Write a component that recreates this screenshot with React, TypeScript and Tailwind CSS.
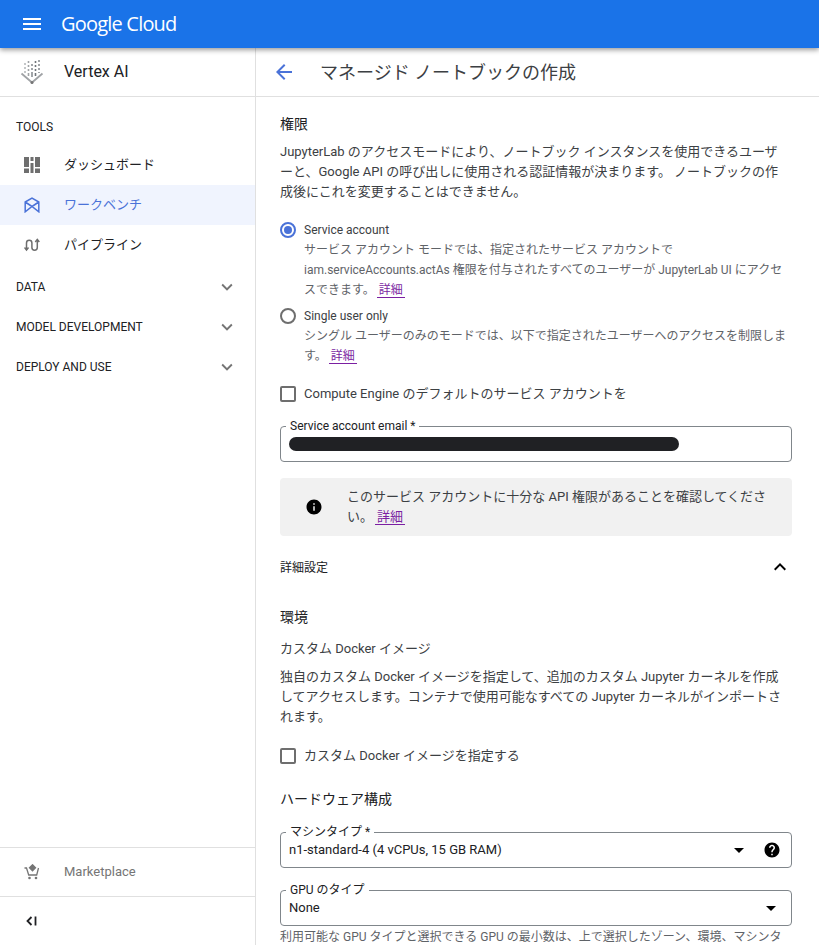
import React from 'react';

const MENU = 'M3 18h18v-2H3v2zm0-5h18v-2H3v2zm0-7v2h18V6H3z';
const BACK = 'M20 11H7.83l5.59-5.59L12 4l-8 8 8 8 1.41-1.41L7.83 13H20v-2z';
const EXPAND_MORE = 'M16.59 8.59L12 13.17 7.41 8.59 6 10l6 6 6-6z';
const EXPAND_LESS = 'M12 8l-6 6 1.41 1.41L12 10.83l4.59 4.58L18 14z';
const INFO = 'M12 2C6.48 2 2 6.48 2 12s4.48 10 10 10 10-4.48 10-10S17.52 2 12 2zm1 15h-2v-6h2v6zm0-8h-2V7h2v2z';
const HELP = 'M12 2C6.48 2 2 6.48 2 12s4.48 10 10 10 10-4.48 10-10S17.52 2 12 2zm1 17h-2v-2h2v2zm2.07-7.75l-.9.92C13.45 12.9 13 13.5 13 15h-2v-.5c0-1.1.45-2.1 1.17-2.83l1.24-1.26c.37-.36.59-.86.59-1.41 0-1.1-.9-2-2-2s-2 .9-2 2H8c0-2.21 1.79-4 4-4s4 1.79 4 4c0 .88-.36 1.68-.93 2.25z';
const DROP = 'M7 10l5 5 5-5z';

const Icon = ({ d, className }: { d: string; className?: string }) => (
  <svg viewBox="0 0 24 24" fill="currentColor" className={className}>
    <path d={d} />
  </svg>
);

const VertexLogo = () => (
  <svg viewBox="0 0 24 26" className="w-6 h-[26px]" fill="none" stroke="#8a8f94">
    <g strokeWidth="1.6">
      <path d="M5 4v2M5 8v2M5 12v2" stroke="#b5b8bb" />
      <path d="M8.5 2v2M8.5 6v2M8.5 10v2M8.5 14v3" stroke="#a0a3a6" />
      <path d="M12 5v2M12 9v2M12 13v5" stroke="#8a8f94" />
      <path d="M15.5 2v2M15.5 6v2M15.5 10v2M15.5 14v3" stroke="#70757a" />
      <path d="M19 1v2M19 5v2M19 9v2M19 13v1" stroke="#8a8f94" />
    </g>
    <path d="M1.5 14.5L12 23.5l10.5-9" strokeWidth="1.8" stroke="#a0a3a6" />
    <circle cx="12" cy="23.5" r="1.5" fill="#757575" stroke="none" />
  </svg>
);

const DashboardIcon = () => (
  <svg viewBox="0 0 16 16" className="w-4 h-4" fill="#6e6e6e">
    <rect x="0" y="0" width="5" height="10" />
    <rect x="0" y="11.5" width="5" height="4.5" />
    <rect x="6.5" y="0" width="3" height="4" />
    <rect x="6.5" y="6" width="3" height="10" />
    <rect x="11" y="0" width="5" height="10" />
    <rect x="11" y="11.5" width="5" height="4.5" />
  </svg>
);

const WorkbenchIcon = () => (
  <svg viewBox="0 0 16 16" className="w-4 h-4" fill="none" stroke="#4a72d8" strokeWidth="1.5">
    <path d="M1.2 5L8 1.2 14.8 5V14.8L8 9.5 1.2 14.8zM1.2 5L8 9.5 14.8 5" />
  </svg>
);

const PipelineIcon = () => (
  <svg viewBox="0 0 16 14" className="w-4 h-[14px]" fill="none" stroke="#6e6e6e" strokeWidth="1.5">
    <path d="M2.5 11.5V5a2.7 2.7 0 0 1 5.4 0v4.5a2.7 2.7 0 0 0 5.4 0V2" />
    <path d="M0.5 9.5l2 2.5 2-2.5M11.3 4l2-2.5 2 2.5" />
  </svg>
);

const CartIcon = () => (
  <svg viewBox="0 0 16 16" className="w-4 h-4" fill="none" stroke="#757575" strokeWidth="1.3">
    <path d="M0.5 4h2l2.2 7h8l1.8-7" />
    <path d="M8.5 0.8l3 3-3 3-3-3z" fill="#757575" />
    <circle cx="5.5" cy="14" r="1.3" fill="#757575" stroke="none" />
    <circle cx="12" cy="14" r="1.3" fill="#757575" stroke="none" />
  </svg>
);

const NavItem = ({ icon, label, active }: { icon: React.ReactNode; label: string; active?: boolean }) => (
  <div className={`flex items-center h-10 pl-6 ${active ? 'bg-[#f0f4fe] text-[#4a72d8]' : 'text-[#202124]'}`}>
    <span className="w-10 shrink-0">{icon}</span>
    <span className="text-[13px]">{label}</span>
  </div>
);

const NavGroup = ({ label }: { label: string }) => (
  <div className="flex items-center justify-between h-10 pl-4 pr-[17px] text-[12px] text-[#202124]">
    <span>{label}</span>
    <Icon d={EXPAND_MORE} className="w-[22px] h-[22px] text-[#757575]" />
  </div>
);

const Radio = ({ checked, label }: { checked?: boolean; label: string }) => (
  <div className="flex items-center h-5 text-[12px] text-[#3c4043]">
    <span className={`w-4 h-4 rounded-full border-2 flex items-center justify-center mr-2 ${checked ? 'border-[#4a72d8]' : 'border-[#6e6e6e]'}`}>
      {checked && <span className="w-2 h-2 rounded-full bg-[#4a72d8]" />}
    </span>
    {label}
  </div>
);

const Check = ({ label }: { label: string }) => (
  <div className="flex items-center h-5 text-[13px] text-[#3c4043]">
    <span className="w-4 h-4 rounded-[2px] border-2 border-[#6e6e6e] mr-2" />
    {label}
  </div>
);

const More = () => (
  <span className="ml-[2px] px-[2px] text-[#7b1fa2] border-b border-[#7b1fa2]">詳細</span>
);

const Field = ({ label, children }: { label: string; children: React.ReactNode }) => (
  <div className="relative h-9 rounded border border-[#80868b] flex items-center pl-2 pr-2">
    <span className="absolute -top-[9px] left-[5px] bg-white px-1 text-[12px] leading-[16px] text-[#202124]">{label}</span>
    {children}
  </div>
);

export default function App() {
  return (
    <div className="h-screen overflow-hidden flex flex-col bg-white font-['Roboto','Noto_Sans_CJK_JP',sans-serif]">
      <header className="relative z-10 h-12 shrink-0 bg-[#1a73e8] shadow-[0_2px_5px_rgba(0,0,0,0.4)] flex items-center pl-5 text-white">
        <Icon d={MENU} className="w-6 h-6 mr-[17px]" />
        <span className="text-[20px] tracking-[-0.8px] -mt-[1px] font-['Open_Sans',sans-serif]">Google Cloud</span>
      </header>

      <div className="flex flex-1 min-h-0">
        <aside className="w-[256px] shrink-0 border-r border-[#e0e0e0] flex flex-col">
          <div className="h-[49px] shrink-0 border-b border-[#e0e0e0] flex items-center pl-5">
            <span className="w-11 shrink-0"><VertexLogo /></span>
            <span className="text-[16px] text-[#202124]">Vertex AI</span>
          </div>
          <div className="text-[12px] text-[#202124] pl-4 pt-[22px] pb-[10px] leading-4">TOOLS</div>
          <NavItem icon={<DashboardIcon />} label="ダッシュボード" />
          <NavItem icon={<WorkbenchIcon />} label="ワークベンチ" active />
          <NavItem icon={<PipelineIcon />} label="パイプライン" />
          <div className="h-[2px] shrink-0" />
          <NavGroup label="DATA" />
          <NavGroup label="MODEL DEVELOPMENT" />
          <NavGroup label="DEPLOY AND USE" />
          <div className="mt-auto">
            <div className="h-[49px] border-t border-[#e0e0e0] flex items-center pl-6">
              <span className="w-10 shrink-0"><CartIcon /></span>
              <span className="text-[13px] text-[#757575]">Marketplace</span>
            </div>
            <div className="h-[49px] border-t border-[#e0e0e0] flex items-center pl-[26px] text-[#202124]">
              <svg viewBox="0 0 11 10" className="w-[11px] h-[10px]" fill="none" stroke="currentColor" strokeWidth="1.8">
                <path d="M5.5 1L1.5 5l4 4M9.5 0.5v9" />
              </svg>
            </div>
          </div>
        </aside>

        <main className="flex-1 min-w-0 flex flex-col">
          <div className="h-[49px] shrink-0 border-b border-[#e0e0e0] flex items-center pl-4">
            <Icon d={BACK} className="w-6 h-6 text-[#4a72d8] mr-6" />
            <span className="text-[18px] text-[#3c4043]">マネージド ノートブックの作成</span>
          </div>

          <div className="pl-6 pr-[27px] pt-[17px]">
            <h2 className="text-[14px] leading-5 text-[#202124]">権限</h2>
            <p className="mt-[8px] pr-1 text-[13px] leading-5 text-[#3c4043]">
              JupyterLab のアクセスモードにより、ノートブック インスタンスを使用できるユーザーと、Google API の呼び出しに使用される認証情報が決まります。 ノートブックの作成後にこれを変更することはできません。
            </p>

            <div className="mt-[18px]">
              <Radio checked label="Service account" />
              <p className="pl-6 text-[12px] leading-5 text-[#5f6368]">
                サービス アカウント モードでは、指定されたサービス アカウントで iam.serviceAccounts.actAs 権限を付与されたすべてのユーザーが JupyterLab UI にアクセスできます。<More />
              </p>
            </div>
            <div className="mt-[6px]">
              <Radio label="Single user only" />
              <p className="pl-6 text-[12px] leading-5 text-[#5f6368]">
                シングル ユーザーのみのモードでは、以下で指定されたユーザーへのアクセスを制限します。<More />
              </p>
            </div>

            <div className="mt-[18px]"><Check label="Compute Engine のデフォルトのサービス アカウントを" /></div>

            <div className="mt-[22px]">
              <Field label="Service account email *">
                <span className="block w-[390px] h-[14px] rounded-full bg-[#202124]" />
              </Field>
            </div>

            <div className="mt-4 h-[58px] rounded bg-[#f1f1f1] flex items-center">
              <span className="w-[67px] shrink-0 flex justify-center"><Icon d={INFO} className="w-[18px] h-[18px] text-black" /></span>
              <p className="text-[13px] leading-5 text-[#3c4043] pr-4">
                このサービス アカウントに十分な API 権限があることを確認してください。<More />
              </p>
            </div>

            <div className="mt-[21px] flex items-center justify-between h-5 pr-[1px]">
              <span className="text-[12px] text-[#202124] pt-[2px]">詳細設定</span>
              <Icon d={EXPAND_LESS} className="w-6 h-6 text-black -mr-[1px]" />
            </div>

            <h2 className="mt-[30px] text-[14px] leading-5 text-[#202124]">環境</h2>
            <div className="mt-[12px] text-[13px] leading-5 text-[#3c4043]">カスタム Docker イメージ</div>
            <p className="mt-[8px] pr-1 text-[13px] leading-5 text-[#3c4043]">
              独自のカスタム Docker イメージを指定して、追加のカスタム Jupyter カーネルを作成してアクセスします。コンテナで使用可能なすべての Jupyter カーネルがインポートされます。
            </p>

            <div className="mt-[19px]"><Check label="カスタム Docker イメージを指定する" /></div>

            <h2 className="mt-[23px] text-[14px] leading-5 text-[#202124]">ハードウェア構成</h2>

            <div className="mt-[23px]">
              <Field label="マシンタイプ *">
                <span className="text-[13px] text-[#202124] flex-1">n1-standard-4 (4 vCPUs, 15 GB RAM)</span>
                <Icon d={DROP} className="w-6 h-6 text-black" />
                <Icon d={HELP} className="w-[18px] h-[18px] text-black ml-[12px] mr-[2px]" />
              </Field>
            </div>
            <div className="mt-[22px]">
              <Field label="GPU のタイプ">
                <span className="text-[13px] text-[#202124] flex-1">None</span>
                <Icon d={DROP} className="w-6 h-6 text-black" />
              </Field>
            </div>
            <p className="mt-[1px] text-[12px] leading-5 text-[#5f6368]">
              利用可能な GPU タイプと選択できる GPU の最小数は、上で選択したゾーン、環境、マシンタイプによって異なります。
            </p>
          </div>
        </main>
      </div>
    </div>
  );
}
